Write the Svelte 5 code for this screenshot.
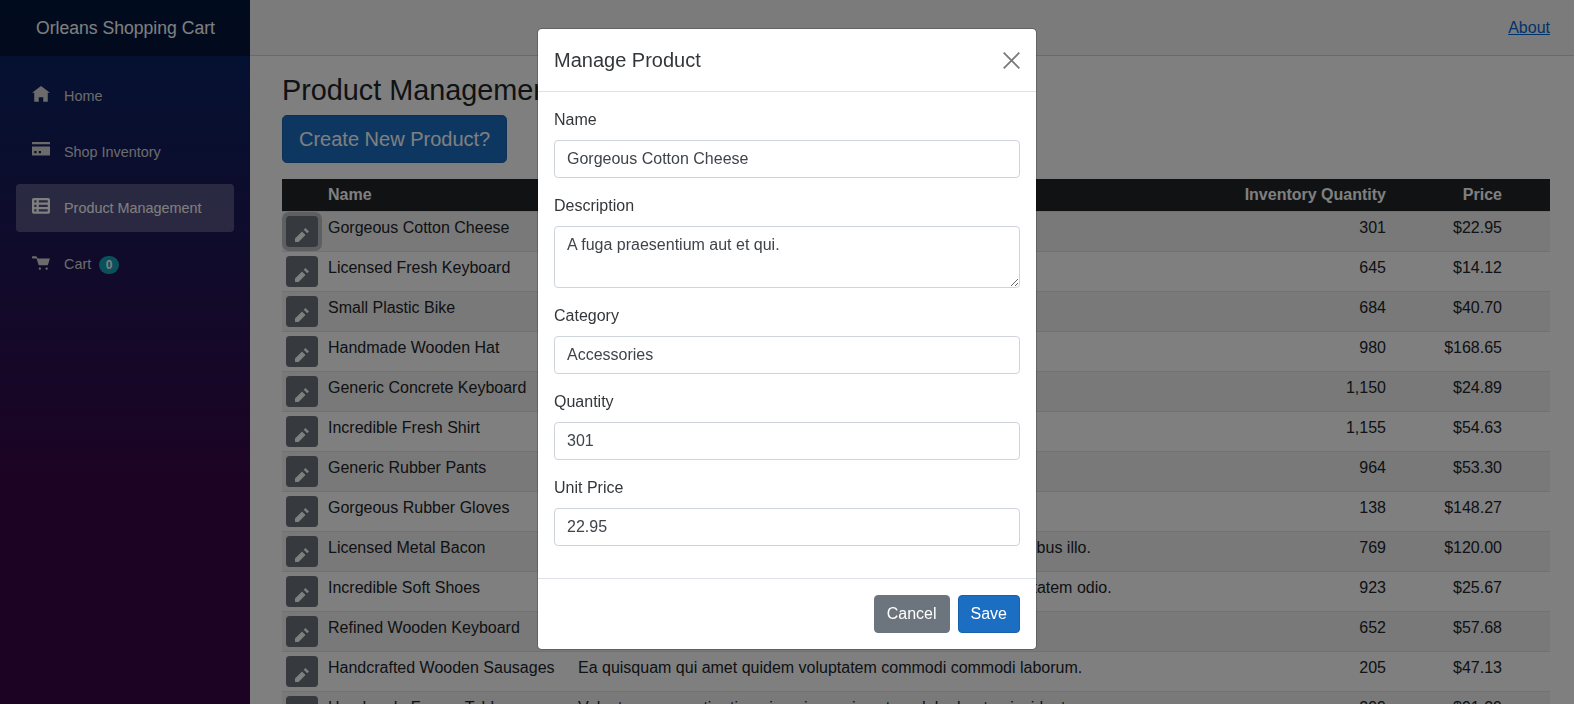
<script lang="ts">
	// sidebar links, paths are drawn on an 8x8 grid
	const navItems = [
		{ label: 'Home', path: 'M4 0l-4 3h1v4h2v-2h2v2h2v-4.03l1 .03-4-3z' },
		{
			label: 'Shop Inventory',
			path: 'M.25 0c-.14 0-.25.11-.25.25v.75h8v-.75c0-.14-.11-.25-.25-.25h-7.5zm-.25 2v3.75c0 .14.11.25.25.25h7.5c.14 0 .25-.11.25-.25v-3.75h-8zm1 2h1v1h-1v-1zm2 0h1v1h-1v-1z'
		},
		{
			label: 'Product Management',
			active: true,
			path: 'M.75 0c-.41 0-.75.34-.75.75v5.5c0 .41.34.75.75.75h6.5c.41 0 .75-.34.75-.75v-5.5c0-.41-.34-.75-.75-.75h-6.5zm.25 1h1v1h-1v-1zm2 0h4v1h-4v-1zm-2 2h1v1h-1v-1zm2 0h4v1h-4v-1zm-2 2h1v1h-1v-1zm2 0h4v1h-4v-1z'
		},
		{
			label: 'Cart',
			badge: 0,
			path: 'M.34 1a.5.5 0 0 0 .16 1h1.5l.09.25.41 1.25.41 1.25c.04.13.21.25.34.25h3.5c.14 0 .3-.12.34-.25l.81-2.5c.04-.13-.02-.25-.16-.25h-5.25l-.34-.66a.5.5 0 0 0-.44-.34h-2a.5.5 0 0 0-.09 0 .5.5 0 0 0-.06 0 .5.5 0 0 0-.03 0zm3.16 5c-.28 0-.5.22-.5.5s.22.5.5.5.5-.22.5-.5-.22-.5-.5-.5zm3 0c-.28 0-.5.22-.5.5s.22.5.5.5.5-.22.5-.5-.22-.5-.5-.5z'
		}
	];

	const pencil = 'M6 0l-1 1 2 2 1-1-2-2zm-2 2l-4 4v2h2l4-4-2-2z';

	const products = [
		{ name: 'Gorgeous Cotton Cheese', description: 'A fuga praesentium aut et qui.', quantity: '301', price: '$22.95' },
		{ name: 'Licensed Fresh Keyboard', description: 'Sint nihil dolorem nobis.', quantity: '645', price: '$14.12' },
		{ name: 'Small Plastic Bike', description: 'Aut qui ipsa velit rerum.', quantity: '684', price: '$40.70' },
		{ name: 'Handmade Wooden Hat', description: 'Et voluptas sed quia.', quantity: '980', price: '$168.65' },
		{ name: 'Generic Concrete Keyboard', description: 'Quod sit enim ut.', quantity: '1,150', price: '$24.89' },
		{ name: 'Incredible Fresh Shirt', description: 'Rerum vel magni est.', quantity: '1,155', price: '$54.63' },
		{ name: 'Generic Rubber Pants', description: 'Nam iure soluta in.', quantity: '964', price: '$53.30' },
		{ name: 'Gorgeous Rubber Gloves', description: 'Id quae eos dolor.', quantity: '138', price: '$148.27' },
		{ name: 'Licensed Metal Bacon', description: 'Quia nemo et quidem omnis dolor officia eum aut rerum voluptatibus illo.', quantity: '769', price: '$120.00' },
		{ name: 'Incredible Soft Shoes', description: 'Sed aperiam minima ut rerum dolores et quis nemo a cum voluptatem odio.', quantity: '923', price: '$25.67' },
		{ name: 'Refined Wooden Keyboard', description: 'Non ea tempora.', quantity: '652', price: '$57.68' },
		{ name: 'Handcrafted Wooden Sausages', description: 'Ea quisquam qui amet quidem voluptatem commodi commodi laborum.', quantity: '205', price: '$47.13' },
		{ name: 'Handmade Frozen Table', description: 'Voluptas occaecati ratione in quia omnis autem dolor beatae incidunt.', quantity: '299', price: '$91.29' }
	];

	let name = 'Gorgeous Cotton Cheese';
	let description = 'A fuga praesentium aut et qui.';
	let category = 'Accessories';
	let quantity = '301';
	let unitPrice = '22.95';
</script>

<div class="page">
	<aside class="sidebar">
		<div class="brand">Orleans Shopping Cart</div>
		<nav class="nav">
			{#each navItems as item}
				<a href="#top" class="nav-link" class:active={item.active}>
					<svg class="nav-icon" viewBox="0 0 8 8" aria-hidden="true"><path d={item.path} /></svg>
					<span>{item.label}</span>
					{#if item.badge !== undefined}
						<span class="badge">{item.badge}</span>
					{/if}
				</a>
			{/each}
		</nav>
	</aside>

	<div class="main">
		<header class="top-row">
			<a href="#top">About</a>
		</header>
		<div class="content">
			<h1>Product Management</h1>
			<button type="button" class="btn btn-lg">Create New Product?</button>
			<table>
				<colgroup>
					<col class="col-edit" />
					<col class="col-name" />
					<col />
					<col class="col-qty" />
					<col class="col-price" />
					<col class="col-end" />
				</colgroup>
				<thead>
					<tr>
						<th></th>
						<th>Name</th>
						<th></th>
						<th class="num">Inventory Quantity</th>
						<th class="num">Price</th>
						<th></th>
					</tr>
				</thead>
				<tbody>
					{#each products as product, i}
						<tr>
							<td class="edit">
								<button type="button" class="btn-edit" class:focused={i === 0} aria-label="Edit">
									<svg viewBox="0 0 8 8" aria-hidden="true"><path d={pencil} /></svg>
								</button>
							</td>
							<td>{product.name}</td>
							<td>{product.description}</td>
							<td class="num">{product.quantity}</td>
							<td class="num">{product.price}</td>
							<td></td>
						</tr>
					{/each}
				</tbody>
			</table>
		</div>
	</div>
</div>

<div class="backdrop"></div>

<div class="modal">
	<div class="modal-header">
		<h5>Manage Product</h5>
		<button type="button" class="close" aria-label="Close">
			<svg viewBox="0 0 17 17" aria-hidden="true"><path d="M.7.7l15.6 15.6M16.3.7L.7 16.3" /></svg>
		</button>
	</div>
	<form class="modal-body">
		<div class="form-group">
			<label for="name">Name</label>
			<input id="name" type="text" bind:value={name} />
		</div>
		<div class="form-group">
			<label for="description">Description</label>
			<textarea id="description" rows="2" bind:value={description}></textarea>
		</div>
		<div class="form-group">
			<label for="category">Category</label>
			<input id="category" type="text" bind:value={category} />
		</div>
		<div class="form-group">
			<label for="quantity">Quantity</label>
			<input id="quantity" type="text" bind:value={quantity} />
		</div>
		<div class="form-group">
			<label for="price">Unit Price</label>
			<input id="price" type="text" bind:value={unitPrice} />
		</div>
	</form>
	<div class="modal-footer">
		<button type="button" class="btn btn-cancel">Cancel</button>
		<button type="button" class="btn">Save</button>
	</div>
</div>

<style>
	* {
		box-sizing: border-box;
	}

	:global(body) {
		font-family: 'Liberation Sans', Arial, sans-serif;
		font-size: 16px;
		line-height: 1.5;
		color: #212529;
		background: #ffffff;
		overflow: hidden;
	}

	.page {
		display: flex;
		height: 100vh;
		overflow: hidden;
	}

	/* sidebar */
	.sidebar {
		flex: 0 0 250px;
		background-image: linear-gradient(180deg, rgb(5, 39, 103) 0%, #3a0647 70%);
	}

	.brand {
		height: 56px;
		padding-left: 36px;
		line-height: 56px;
		font-size: 17.6px;
		color: #ffffff;
		background-color: rgba(0, 0, 0, 0.4);
	}

	.nav {
		display: flex;
		flex-direction: column;
		gap: 8px;
		padding: 16px;
	}

	.nav-link {
		display: flex;
		align-items: center;
		height: 48px;
		padding: 2px 0 0 16px;
		border-radius: 4px;
		font-size: 14.4px;
		color: #d7d7d7;
		text-decoration: none;
	}

	.nav-link.active {
		background-color: rgba(255, 255, 255, 0.25);
		color: #ffffff;
	}

	.nav-icon {
		flex: 0 0 18px;
		align-self: flex-start;
		width: 18px;
		height: 18px;
		margin: 12px 14px 0 0;
		fill: currentColor;
	}

	.badge {
		margin-left: 8px;
		min-width: 20px;
		height: 18px;
		padding: 0 6px;
		border-radius: 10px;
		background-color: #17a2b8;
		color: #ffffff;
		font-size: 12px;
		font-weight: 700;
		line-height: 18px;
		text-align: center;
	}

	/* main column */
	.main {
		flex: 1;
		min-width: 0;
	}

	.top-row {
		display: flex;
		justify-content: flex-end;
		align-items: center;
		height: 56px;
		padding-right: 24px;
		background-color: #f7f7f7;
		border-bottom: 1px solid #d6d5d5;
	}

	.top-row a {
		color: #0366d6;
	}

	.content {
		padding: 17px 24px 0 32px;
	}

	h1 {
		margin: 0 0 7px;
		font-size: 28.8px;
		font-weight: 400;
		line-height: 35px;
	}

	.btn {
		padding: 6px 12px;
		border: 1px solid #1861ac;
		border-radius: 4px;
		background-color: #1b6ec2;
		color: #ffffff;
		font-family: inherit;
		font-size: 16px;
		line-height: 24px;
	}

	.btn-lg {
		padding: 8px 16px;
		font-size: 20px;
		line-height: 30px;
		border-radius: 4.8px;
	}

	.btn-cancel {
		background-color: #6c757d;
		border-color: #6c757d;
	}

	/* products table */
	table {
		width: 100%;
		margin-top: 16px;
		border-collapse: separate;
		border-spacing: 0;
		table-layout: fixed;
	}

	.col-edit {
		width: 40px;
	}
	.col-name {
		width: 250px;
	}
	.col-qty {
		width: 181px;
	}
	.col-price {
		width: 116px;
	}
	.col-end {
		width: 42px;
	}

	th {
		height: 32px;
		padding: 4px 6px;
		background-color: #212529;
		color: #ffffff;
		font-weight: 700;
		text-align: left;
		white-space: nowrap;
	}

	td {
		padding: 4px 6px;
		border-top: 1px solid #dee2e6;
		vertical-align: top;
		white-space: nowrap;
	}

	tbody tr:nth-child(odd) {
		background-color: rgba(0, 0, 0, 0.05);
	}

	th.num,
	td.num {
		text-align: right;
	}

	td.edit {
		padding: 4px;
	}

	.btn-edit {
		display: block;
		width: 32px;
		height: 31px;
		padding: 0;
		border: 1px solid #6c757d;
		border-radius: 3.2px;
		background-color: #6c757d;
		color: #ffffff;
	}

	.btn-edit svg {
		display: block;
		width: 14px;
		height: 14px;
		margin: 6px auto 0;
		fill: currentColor;
	}

	.btn-edit.focused {
		box-shadow: 0 0 0 4px rgba(130, 138, 145, 0.5);
	}

	/* modal over the page */
	.backdrop {
		position: fixed;
		inset: 0;
		background-color: rgba(0, 0, 0, 0.5);
	}

	.modal {
		position: fixed;
		top: 28px;
		left: 537px;
		width: 500px;
		border: 1px solid rgba(0, 0, 0, 0.2);
		border-radius: 4.8px;
		background-color: #ffffff;
		background-clip: padding-box;
		color: #33373a;
	}

	.modal-header {
		display: flex;
		justify-content: space-between;
		align-items: center;
		padding: 16px;
		border-bottom: 1px solid #dee2e6;
	}

	h5 {
		margin: 0;
		font-size: 20px;
		font-weight: 400;
		line-height: 30px;
	}

	.close {
		padding: 0;
		border: 0;
		background: none;
		width: 17px;
		height: 17px;
		line-height: 0;
	}

	.close svg {
		display: block;
		width: 17px;
		height: 17px;
		fill: none;
		stroke: #787878;
		stroke-width: 1.8;
	}

	.modal-body {
		padding: 16px 16px 0;
	}

	.form-group {
		margin-bottom: 16px;
	}

	.form-group:last-child {
		padding-bottom: 16px;
	}

	label {
		display: block;
		margin-bottom: 8px;
	}

	input,
	textarea {
		display: block;
		width: 100%;
		padding: 6px 12px;
		border: 1px solid #ced4da;
		border-radius: 4px;
		background-color: #ffffff;
		color: #3f444a;
		font-family: inherit;
		font-size: 16px;
		line-height: 24px;
	}

	input {
		height: 38px;
	}

	textarea {
		height: 62px;
		resize: vertical;
	}

	.modal-footer {
		display: flex;
		justify-content: flex-end;
		gap: 8px;
		padding: 16px;
		border-top: 1px solid #dee2e6;
	}
</style>
